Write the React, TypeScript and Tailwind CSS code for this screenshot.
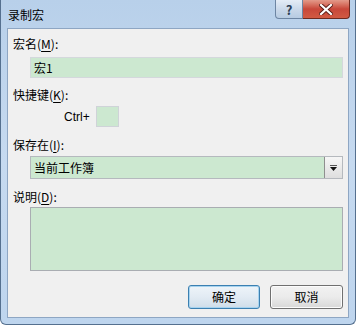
import React from "react";

const font = { fontFamily: '"Noto Sans CJK SC", "Noto Sans", sans-serif' };

function Label({ text, k }: { text: string; k: string }) {
  return (
    <div className="h-[16px] leading-[16px] text-[12px] text-black pl-[5px]">
      {text}(<span className="underline underline-offset-2">{k}</span>):
    </div>
  );
}

export default function App() {
  return (
    <div className="w-[356px] h-[326px] bg-white" style={font}>
      <div className="w-[356px] h-[325px] flex flex-col rounded-b-[6px] border border-t-0 border-[#55708f] bg-gradient-to-b from-[#b8d0ea] via-[#c6daf0] to-[#bed5ee] px-[6px] pb-[6px]">
        <div className="h-[28px] flex items-start shrink-0">
          <div className="pt-[6px] pl-[1px] text-[12px] leading-[18px] text-black">录制宏</div>
          <div className="flex-1" />
          <div className="flex mr-[-1px]">
            <div className="w-[28px] h-[19px] rounded-bl-[4px] border border-t-0 border-[#6d85a3] bg-gradient-to-b from-[#e4ecf6] via-[#cbd9ea] to-[#b7cbe2] flex items-center justify-center text-[13px] font-bold text-[#2d3f57] leading-none">
              ?
            </div>
            <div className="w-[47px] h-[19px] rounded-br-[4px] border border-t-0 border-l-0 border-[#6e2a20] bg-gradient-to-b from-[#e39a8a] via-[#c8473a] to-[#d15a43] flex items-center justify-center">
              <svg width="14" height="11" viewBox="0 0 14 11">
                <path d="M2 1 L12 10 M12 1 L2 10" stroke="#5a1d16" strokeWidth="4" strokeLinecap="square" />
                <path d="M2 1 L12 10 M12 1 L2 10" stroke="#ffffff" strokeWidth="2.2" strokeLinecap="square" />
              </svg>
            </div>
          </div>
        </div>
        <div className="flex-1 border border-[#8ea6c3] bg-[#f0f0f0] flex flex-col pt-[7px] pr-[5px]">
          <Label text="宏名" k="M" />
          <div className="mt-[5px] ml-[22px] h-[21px] border border-[#d4d8dc] bg-[#cce8d0] text-[12px] leading-[19px] pl-[3px] text-black">
            宏1
          </div>
          <div className="mt-[9px]">
            <Label text="快捷键" k="K" />
          </div>
          <div className="mt-[3px] flex items-center h-[21px] pl-[56px]">
            <span className="text-[12px] leading-[16px] text-black" style={{ fontFamily: '"Liberation Sans", "Noto Sans CJK SC", sans-serif' }}>Ctrl+</span>
            <div className="ml-[6px] w-[23px] h-[21px] border border-[#cfd3d8] bg-[#cce8d0]" />
          </div>
          <div className="mt-[10px]">
            <Label text="保存在" k="I" />
          </div>
          <div className="mt-[3px] ml-[22px] h-[23px] flex border border-[#b5b9be] bg-[#cce8d0]">
            <div className="flex-1 text-[12px] leading-[21px] pl-[3px] text-black">当前工作簿</div>
            <div className="w-[18px] h-[21px] border-l border-[#8f8f8f] bg-gradient-to-b from-[#f6f6f6] to-[#dedede] flex items-center justify-center">
              <svg width="7" height="6" viewBox="0 0 7 6">
                <rect x="0" y="0" width="7" height="1" fill="#555" />
                <path d="M0 2 L7 2 L3.5 6 Z" fill="#111" />
              </svg>
            </div>
          </div>
          <div className="mt-[10px]">
            <Label text="说明" k="D" />
          </div>
          <div className="mt-[2px] ml-[22px] h-[64px] border border-[#a9adb2] bg-[#cce8d0]" />
          <div className="mt-[14px] flex justify-end gap-[10px]">
            <button className="w-[72px] h-[24px] rounded-[3px] border border-[#3c80b1] bg-gradient-to-b from-[#eef4f9] via-[#e2ebf3] to-[#cfdde9] text-[12px] text-black shadow-[inset_0_0_0_1px_#a7d3ef]">
              确定
            </button>
            <button className="w-[73px] h-[24px] rounded-[3px] border border-[#707070] bg-gradient-to-b from-[#f2f2f2] via-[#ebebeb] to-[#d8d8d8] text-[12px] text-black shadow-[inset_0_0_0_1px_#fcfcfc]">
              取消
            </button>
          </div>
        </div>
      </div>
    </div>
  );
}
